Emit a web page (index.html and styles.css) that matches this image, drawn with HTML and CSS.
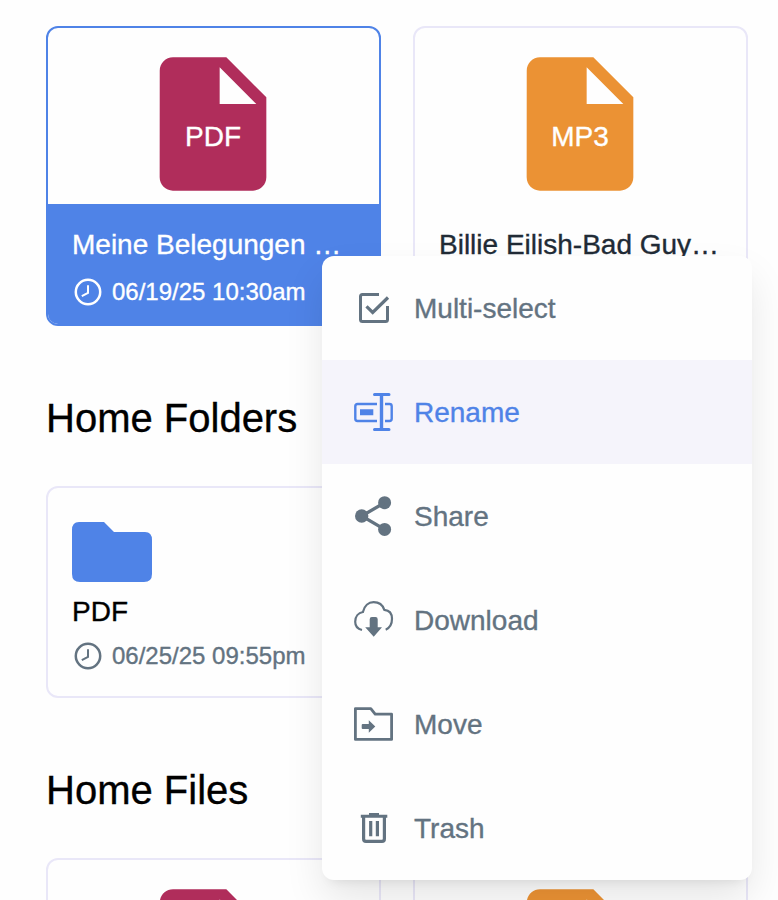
FILE: index.html
```html
<!DOCTYPE html>
<html lang="en">
<head>
<meta charset="utf-8">
<title>Home</title>
<link rel="stylesheet" href="styles.css">
</head>
<body>
<svg class="defs" aria-hidden="true">
  <symbol id="file" viewBox="0 0 24 24"><path fill="currentColor" d="M6 2c-1.1 0-1.99.9-1.99 2L4 20c0 1.1.89 2 1.99 2H18c1.1 0 2-.9 2-2V8l-6-6H6zm7 7V3.5L18.5 9H13z"/></symbol>
  <symbol id="clock" viewBox="0 0 32 32"><g fill="none" stroke="currentColor"><circle cx="16" cy="16" r="12.2" stroke-width="2.5"/><path d="M16 9.300v7.700l-6.200 3.200" stroke-width="2"/></g></symbol>
</svg>
<main class="page">
  <section class="grid">
    <article class="card file selected">
      <div class="preview pdf"><svg class="file-icon"><use href="#file"/></svg><span class="ext">PDF</span></div>
      <div class="info">
        <div class="name">Meine Belegungen …</div>
        <div class="date"><svg class="clock"><use href="#clock"/></svg>06/19/25 10:30am</div>
      </div>
    </article>
    <article class="card file">
      <div class="preview mp3"><svg class="file-icon"><use href="#file"/></svg><span class="ext">MP3</span></div>
      <div class="info"><div class="name">Billie Eilish-Bad Guy…</div></div>
    </article>
  </section>
  <h2 class="heading">Home Folders</h2>
  <section class="grid">
    <article class="card folder">
      <svg class="folder-icon" viewBox="0 0 80 60"><path fill="currentColor" d="M7 0H32L42 10H73Q80 10 80 18V52Q80 60 72 60H8Q0 60 0 52V8Q0 0 7 0Z"/></svg>
      <div class="name">PDF</div>
      <div class="date"><svg class="clock"><use href="#clock"/></svg>06/25/25 09:55pm</div>
    </article>
  </section>
  <h2 class="heading">Home Files</h2>
  <section class="grid">
    <article class="card file"><div class="preview pdf"><svg class="file-icon"><use href="#file"/></svg></div></article>
    <article class="card file"><div class="preview mp3"><svg class="file-icon"><use href="#file"/></svg></div></article>
  </section>
</main>
<nav class="menu">
  <div class="item">
    <svg class="icon" viewBox="0 0 40 40"><g fill="none" stroke="currentColor" stroke-width="3"><path d="M25 6.500H8.500Q6.500 6.500 6.500 8.500V31.500Q6.500 33.500 8.500 33.500H31.500Q33.500 33.500 33.500 31.500V18"/><path d="M12.500 18.300L18.700 24.500L34 9.500" stroke-width="3.200"/></g></svg><span class="label">Multi-select</span>
  </div>
  <div class="item active">
    <svg class="icon" viewBox="0 0 40 40"><g fill="none" stroke="currentColor"><path d="M23 12H3.500Q1.300 12 1.300 14.200V26.800Q1.300 29 3.500 29H23M31 12H35.500Q37.700 12 37.700 14.200V26.800Q37.700 29 35.500 29H31" stroke-width="2.400"/><path d="M20.500 2.600H35M20.500 37.400H35" stroke-width="3" stroke-linecap="round"/><path d="M27.500 2.600V37.400" stroke-width="3.400"/></g><path fill="currentColor" d="M6 17.300H19.300V23.300H6z"/></svg><span class="label">Rename</span>
  </div>
  <div class="item">
    <svg class="icon" viewBox="0 0 40 40"><g fill="currentColor"><circle cx="30.600" cy="6.700" r="6.500"/><circle cx="7.700" cy="20" r="6.700"/><circle cx="30.600" cy="33.400" r="6.500"/></g><path d="M30.600 6.700L7.700 20L30.600 33.400" fill="none" stroke="currentColor" stroke-width="3.300"/></svg><span class="label">Share</span>
  </div>
  <div class="item">
    <svg class="icon" viewBox="0 0 40 40"><path d="M8 30C3.800 29 1.200 25.700 1.200 21.700C1.200 16.500 4.500 12.800 8.900 12C10.300 5.900 14.500 2.200 19.600 2.200C24.800 2.200 28.700 5 30.300 9.800C35.300 10.200 38 13.800 38 18.800C38 23.700 35.600 28 31.700 29.700" fill="none" stroke="currentColor" stroke-width="2.200"/><path fill="currentColor" d="M15.700 27.200V19.200Q15.700 17 17.900 17H21.500Q23.700 17 23.700 19.200V27.200H28L19.700 36.800L11.200 27.200Z"/></svg><span class="label">Download</span>
  </div>
  <div class="item">
    <svg class="icon" viewBox="0 0 40 40"><path d="M1.400 4.600H16.800L21.200 10.200H37.600V35.400H1.400Z" fill="none" stroke="currentColor" stroke-width="2.800" stroke-linejoin="round"/><path fill="currentColor" d="M8.700 20H14.800V16.300L21.300 22.500L14.800 28.800V25H8.700Q7.700 25 7.700 24V21Q7.700 20 8.700 20Z"/></svg><span class="label">Move</span>
  </div>
  <div class="item">
    <svg class="icon" viewBox="0 0 40 40"><path fill="currentColor" d="M6.800 6.800H15V5H25V6.800H33.300V9.800H6.800Z"/><path d="M9.600 9V30.700Q9.600 33.400 12 33.400H28Q30.400 33.400 30.400 30.700V9" fill="none" stroke="currentColor" stroke-width="3.200"/><path d="M16.700 13V28.300M23.400 13V28.300" stroke="currentColor" stroke-width="3.200"/></svg><span class="label">Trash</span>
  </div>
</nav>
</body>
</html>
```
FILE: styles.css
```css
* { box-sizing: border-box; }

body {
  margin: 0;
  height: 900px;
  overflow: hidden;
  position: relative;
  background: #fefefe;
  color: #000;
  font-family: "Liberation Sans", Arial, sans-serif;
  font-size: 28px;
  -webkit-text-stroke: 0.35px currentColor;
}

svg { display: block; flex: none; }
.defs { position: absolute; width: 0; height: 0; }

.page {
  height: 900px;
  overflow: hidden;
  padding: 26px 30px 0 46px;
}

.grid {
  display: grid;
  grid-template-columns: 335px 335px;
  gap: 32px;
}

.card {
  border: 2px solid #e9e7f8;
  border-radius: 12px;
  overflow: hidden;
}

.file { height: 300px; }

.preview {
  display: grid;
  place-items: center;
  height: 176px;
  padding: 16px 1px 0 0;
}
.file-icon, .ext { grid-area: 1 / 1; }
.file-icon { width: 160px; height: 160px; }
.ext { padding-top: 25px; color: #fff; line-height: 32px; }
.pdf { color: #b02d5b; }
.mp3 { color: #eb9234; }

.info {
  height: 120px;
  padding: 23px 24px 0;
}
.file .name { color: #212b36; }
.name {
  line-height: 36px;
  white-space: nowrap;
}
.date {
  display: flex;
  align-items: center;
  gap: 8px;
  height: 32px;
  color: #637381;
  font-size: 24px;
  white-space: nowrap;
}
.info .date { margin-top: 13px; }
.clock { width: 32px; height: 32px; }

.selected { border-color: #4f83e7; }
.selected .info { background: #4f83e7; }
.file.selected .name, .selected .date { color: #fff; }

.heading {
  margin: 68px 0 44px;
  font-size: 40px;
  font-weight: 400;
  line-height: 48px;
}

.folder {
  height: 212px;
  padding: 34px 24px 0;
}
.folder-icon {
  width: 80px;
  height: 60px;
  margin-bottom: 12px;
  color: #4f83e7;
}
.folder .date { margin-top: 10px; }

.menu {
  position: absolute;
  left: 322px;
  top: 256px;
  width: 430px;
  overflow: hidden;
  border-radius: 12px;
  background: #fefefe;
  color: #637381;
  box-shadow: 0 20px 40px -2px rgba(0, 0, 0, 0.1), 0 8px 12px -8px rgba(0, 0, 0, 0.1);
}
.item {
  display: flex;
  align-items: center;
  gap: 20px;
  height: 104px;
  padding: 0 32px;
}
.label { padding-top: 2px; }
.active {
  background: #f5f4fb;
  color: #4f83e7;
}
.icon { width: 40px; height: 40px; }
```
